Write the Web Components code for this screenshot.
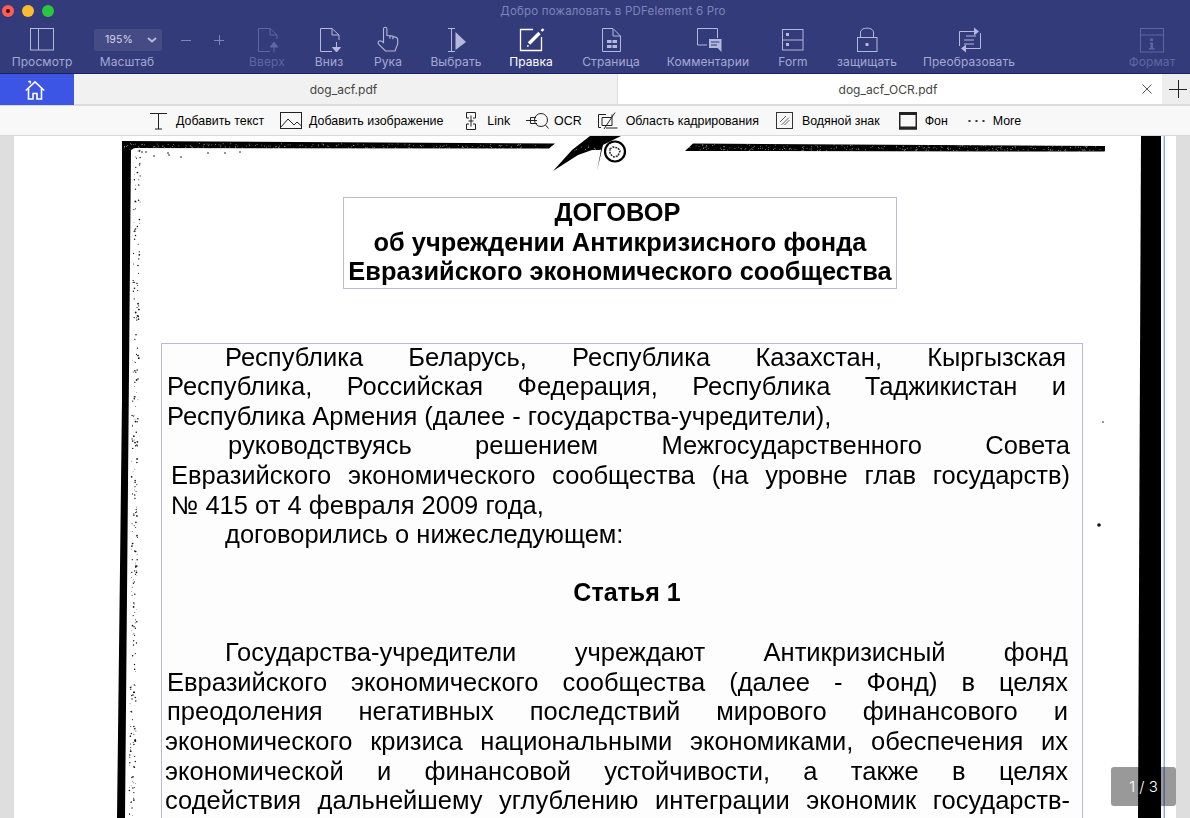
<!DOCTYPE html>
<html lang="ru"><head><meta charset="utf-8"><title>PDFelement</title>
<style>
html,body{margin:0;padding:0;width:1190px;height:818px;overflow:hidden;background:#fff;font-family:"Liberation Sans",Arial,sans-serif}
pdf-app svg{display:block}
</style></head><body>
<pdf-app>
  <pdf-header>
    <span slot="title">Добро пожаловать в PDFelement 6 Pro</span>
    <tool-button w="84"><svg slot="icon" viewBox="20 24 44 32" width="44" height="32" fill="none" stroke="#b4b8da"><rect x="30.5" y="28.5" width="23" height="21.5"/><path d="M38.5 28v22"/></svg>Просмотр</tool-button>
    <zoom-control value="195%">Масштаб</zoom-control>
    <tool-button w="62" state="off"><svg slot="icon" viewBox="245 24 44 32" width="44" height="32" fill="none" stroke="#5f66a3"><path d="M270 51.5H258.5V28.5H270L277 35V39M270 29V35H277"/><path d="M274 47V52.5" /><path d="M274 42L278 47H270Z" fill="#5f66a3"/></svg>Вверх</tool-button>
    <tool-button w="62"><svg slot="icon" viewBox="307 24 44 32" width="44" height="32" fill="none" stroke="#b4b8da"><path d="M332 51.5H320.5V28.5H332L339 35V40M332 29V35H339"/><path d="M336.5 42V48"/><path d="M332.5 47.5H340.5L336.5 52Z" fill="#b4b8da"/></svg>Вниз</tool-button>
    <tool-button w="56"><svg slot="icon" viewBox="366 24 44 32" width="44" height="32" fill="none" stroke="#b4b8da" stroke-width="1.1"><path d="M383.5 42.5V29a1.7 1.7 0 0 1 3.4 0V35.5l3 .2v3-3l3 .5v3-2.6l2.6.5c1.4.3 2.2 1.2 2.2 2.5V44L395 51H385.5L378.8 44.5C377.6 43 378 41 380 40.8 381.3 40.8 382.5 41.6 383.5 42.5Z"/></svg>Рука</tool-button>
    <tool-button w="80"><svg slot="icon" viewBox="434 24 44 32" width="44" height="32" fill="none" stroke="#b4b8da"><path d="M448 28.5H455M451.5 28.5V51.5M448 51.5H455"/><path d="M455.5 32L466 42 455.5 50Z" fill="#b4b8da" stroke="none"/></svg>Выбрать</tool-button>
    <tool-button w="70" state="on"><svg slot="icon" viewBox="509 24 44 32" width="44" height="32" fill="none" stroke="#fff"><path d="M533 29.5H520.5V50.5H541.5V37" stroke-width="1.3"/><path d="M529 43.5L539.5 33" stroke-width="3.4"/><path d="M528 45l-.6 1.4 1.6-.6" stroke-width="1"/><path d="M541.5 31L543.5 29" stroke-width="2.4"/></svg>Правка</tool-button>
    <tool-button w="90"><svg slot="icon" viewBox="589 24 44 32" width="44" height="32" fill="none" stroke="#b4b8da"><path d="M602.5 28.5H613L620.5 36V51.5H602.5ZM613 29V36H620"/><g fill="#b4b8da" stroke="none"><rect x="607" y="40" width="4.5" height="3"/><rect x="612.5" y="40" width="4.5" height="3"/><rect x="607" y="45" width="4.5" height="3"/><rect x="612.5" y="45" width="4.5" height="3"/></g></svg>Страница</tool-button>
    <tool-button w="104"><svg slot="icon" viewBox="686 24 44 32" width="44" height="32" fill="none" stroke="#b4b8da"><path d="M707 45H697.5V28.5H717.5V38"/><path d="M709 39H721.5V52L717.5 48H709Z" fill="#b4b8da" stroke="none"/><path d="M711 42H719.5M711 45H717" stroke="#343b7a"/></svg>Комментарии</tool-button>
    <tool-button w="66"><svg slot="icon" viewBox="771 24 44 32" width="44" height="32" fill="none" stroke="#b4b8da"><rect x="782.5" y="29.5" width="20.5" height="20.5"/><path d="M782 40H803"/><rect x="786" y="33" width="3" height="3" fill="#b4b8da" stroke="none"/><rect x="786" y="43" width="3" height="3" fill="#b4b8da" stroke="none"/></svg>Form</tool-button>
    <tool-button w="82"><svg slot="icon" viewBox="845 24 44 32" width="44" height="32" fill="none" stroke="#b4b8da"><rect x="857.5" y="37.5" width="19.5" height="14"/><path d="M860.5 37.5V33c0-3 2-4.8 6.500-4.800s6.500 1.800 6.500 4.800V37.500"/><rect x="865.500" y="43" width="3" height="3" fill="#b4b8da" stroke="none"/></svg>защищать</tool-button>
    <tool-button w="122"><svg slot="icon" viewBox="947 24 44 32" width="44" height="32" fill="none" stroke="#b4b8da"><path d="M959.500 46V31.500H975M980.500 33V48.500H965M966 36H976M964 40H974M964 44H974"/><path d="M974 27.500L979 31.500 974 35.500ZM966 44.500L961 48.500 966 52.500Z" fill="#b4b8da" stroke="none"/></svg>Преобразовать</tool-button>
    <tool-button w="76" state="off" slot="end"><svg slot="icon" viewBox="1130 24 44 32" width="44" height="32" fill="none" stroke="#5f66a3"><rect x="1140.500" y="28.500" width="23" height="23.500"/><path d="M1140 35H1164"/><path d="M1150 38.500H1153V41H1150ZM1150 42.500H1153V48H1154.500V49.500H1149V48H1150.500V44H1150Z" fill="#5f66a3" stroke="none"/></svg>Формат</tool-button>
  </pdf-header>
  <tab-strip>
    <doc-tab style="--w:543px">dog_acf.pdf</doc-tab>
    <doc-tab style="--w:545px" active>dog_acf_OCR.pdf</doc-tab>
  </tab-strip>
  <edit-toolbar>
    <edit-item gap="8" style="margin-left:150px"><svg slot="icon" viewBox="150 113 18 18" width="18" height="18" fill="none" stroke="#222"><path d="M150 114.500H167M158.500 114.500V130M155 130H162"/></svg>Добавить текст</edit-item>
    <edit-item gap="7" style="margin-left:16px"><svg slot="icon" viewBox="281 113 22 18" width="22" height="18" fill="none" stroke="#222"><rect x="281.500" y="113.500" width="21" height="16"/><path d="M282 128L289 120 295 126 298 123 302.500 127"/></svg>Добавить изображение</edit-item>
    <edit-item gap="11" style="margin-left:23px"><svg slot="icon" viewBox="466 113 10 18" width="10" height="18" fill="none" stroke="#222"><path d="M469 119H466.500V113.500H475.500V119H473M469 125H466.500V130.500H475.500V125H473M471 116.500V127.500M468.500 122H473.500"/></svg>Link</edit-item>
    <edit-item gap="5" style="margin-left:16px"><svg slot="icon" viewBox="526 112 23 18" width="23" height="18" fill="none" stroke="#222"><path d="M536 117.500H530.500V123.500H537M526 120.500H537"/><circle cx="541" cy="120" r="6.500"/><path d="M545.500 125L548.500 128.500"/></svg>OCR</edit-item>
    <edit-item gap="8" style="margin-left:16px"><svg slot="icon" viewBox="598 113 20 18" width="20" height="18" fill="none" stroke="#222"><path d="M606 115.500H598.500V128.500H601M612 115.500V126.500H602V118.500H611M615 113.500L604 130M606 129H617.500"/></svg>Область кадрирования</edit-item>
    <edit-item gap="9" style="margin-left:17px"><svg slot="icon" viewBox="776 112 17 18" width="17" height="18" fill="none" stroke="#333"><rect x="776.500" y="112.500" width="16" height="16"/><path d="M780 122L786 116M781.500 125L789 117.500M784.500 125L789.500 120" stroke="#666"/></svg>Водяной знак</edit-item>
    <edit-item gap="8" style="margin-left:19px"><svg slot="icon" viewBox="899 112 18 18" width="18" height="18" fill="none" stroke="#222"><rect x="899.750" y="112.750" width="16.500" height="16" stroke-width="1.500"/><rect x="899" y="112" width="18" height="3" fill="#222" stroke="none"/><rect x="899" y="126.500" width="18" height="3" fill="#222" stroke="none"/></svg>Фон</edit-item>
    <edit-item gap="8" style="margin-left:20px"><svg slot="icon" viewBox="968 112 17 18" width="17" height="18" fill="#333"><rect x="968.500" y="120" width="2" height="2"/><rect x="975.500" y="120" width="2" height="2"/><rect x="982.500" y="120" width="2" height="2"/></svg>More</edit-item>
  </edit-toolbar>
  <doc-view>
    <title-box>
      <div style="margin-right:5px">ДОГОВОР</div>
      <div>об учреждении Антикризисного фонда</div>
      <div>Евразийского экономического сообщества</div>
    </title-box>
    <body-box>
      <doc-line l="63" r="16" j>Республика Беларусь, Республика Казахстан, Кыргызская</doc-line>
      <doc-line l="5" r="16" j>Республика, Российская Федерация, Республика Таджикистан и</doc-line>
      <doc-line l="5">Республика Армения (далее - государства-учредители),</doc-line>
      <doc-line l="66" r="12" j>руководствуясь решением Межгосударственного Совета</doc-line>
      <doc-line l="9" r="12" j>Евразийского экономического сообщества (на уровне глав государств)</doc-line>
      <doc-line l="9">№ 415 от 4 февраля 2009 года,</doc-line>
      <doc-line l="63">договорились о нижеследующем:</doc-line>
      <doc-line style="height:28.400px"></doc-line>
      <doc-line c>Статья 1</doc-line>
      <doc-line style="height:30.400px"></doc-line>
      <doc-line l="63" r="14" j>Государства-учредители учреждают Антикризисный фонд</doc-line>
      <doc-line l="5" r="14" j>Евразийского экономического сообщества (далее - Фонд) в целях</doc-line>
      <doc-line l="5" r="14" j>преодоления негативных последствий мирового финансового и</doc-line>
      <doc-line l="3" r="14" j>экономического кризиса национальными экономиками, обеспечения их</doc-line>
      <doc-line l="3" r="14" j>экономической и финансовой устойчивости, а также в целях</doc-line>
      <doc-line l="3" r="12" j>содействия дальнейшему углублению интеграции экономик государств-</doc-line>
    </body-box>
    <page-badge slot="over">1 / 3</page-badge>
  </doc-view>
</pdf-app>
<script>
function def(name, css, html, init){
  customElements.define(name, class extends HTMLElement{
    constructor(){super();this.attachShadow({mode:'open'}).innerHTML='<style>'+css+'</style>'+html;}
    connectedCallback(){ if(init) init(this,this.shadowRoot); }
  });
}
const UI='Inter,Roboto,"Liberation Sans",sans-serif';
def('pdf-app',':host{display:flex;flex-direction:column;width:1190px;height:818px;overflow:hidden}','<slot></slot>');
def('pdf-header',`:host{display:block;height:73px;background:#343b7a;border-bottom:1px solid #1c2160;font-family:${UI}}
.t{height:22px;display:flex;align-items:center;position:relative;justify-content:center;padding-left:36px;font-size:11.500px;color:#7e84ba;letter-spacing:.2px}
.l{position:absolute;left:2px;top:5px;display:flex;gap:8px}
.l i{width:12px;height:12px;border-radius:50%;display:block;box-sizing:border-box}
.r{background:#fc5f57;display:flex!important;align-items:center;justify-content:center}.r b{width:4px;height:4px;border-radius:50%;background:#500}
.y{background:#fdbc2e}.g{background:#28c83f}
.b{display:flex;height:51px;padding-top:2px;box-sizing:border-box}.s{flex:1}`,
`<div class="t"><div class="l"><i class="r"><b></b></i><i class="y"></i><i class="g"></i></div><slot name="title"></slot></div>
<div class="b"><slot></slot><span class="s"></span><slot name="end"></slot></div>`);
def('tool-button',`:host{display:flex;flex-direction:column;align-items:center;flex:none;color:#a4a9d2;font-size:12px;line-height:14px;letter-spacing:.1px;white-space:nowrap}
:host([state=off]){color:#5f66a3}:host([state=on]){color:#fff}
.i{height:31px}`,'<div class="i"><slot name="icon"></slot></div><slot></slot>',
(el)=>{el.style.width=el.getAttribute('w')+'px'});
def('zoom-control',`:host{display:block;flex:none;width:152px;color:#a4a9d2;font-size:12px;line-height:14px;letter-spacing:.1px}
.top{display:flex;align-items:center;height:31px;box-sizing:border-box;padding:1px 0 0 10px}
.sel{width:68px;height:22px;background:#454c85;border-radius:2px;display:flex;align-items:center;justify-content:space-between;padding:0 5px 0 11px;box-sizing:border-box;font-size:10.500px;color:#d4d6ea}
.op{display:flex;gap:21px;margin-left:18px}
.lab{width:86px;text-align:center}`,
`<div class="top"><div class="sel"><span id="v"></span><svg width="10" height="6" viewBox="0 0 10 6" fill="none" stroke="#b4b8da" stroke-width="2"><path d="M1 1l4 3.500 4-3.500"/></svg></div>
<div class="op"><svg width="12" height="12" viewBox="0 0 12 12" stroke="#7f85b8"><path d="M1 6.500H11"/></svg><svg width="12" height="12" viewBox="0 0 12 12" stroke="#7f85b8"><path d="M1 6.500H11M6.500 1V11"/></svg></div></div>
<div class="lab"><slot></slot></div>`,(el,s)=>{s.getElementById('v').textContent=el.getAttribute('value')});
def('tab-strip',`:host{display:flex;height:32px;box-sizing:border-box;border-bottom:2px solid #dcdcdc;font-family:${UI};background:#f1f1f1}
.h{width:74px;background:#3d55e5;display:flex;align-items:center;justify-content:center;margin-bottom:-1px;padding-right:5px;box-sizing:border-box}
.p{width:28px;background:#eee;display:flex;align-items:center;justify-content:center;padding-left:3px;box-sizing:border-box}`,
`<div class="h"><svg width="20" height="20" viewBox="0 0 20 20" fill="none" stroke="#fff" stroke-width="1.600"><path d="M.8 10.500L10 1.800l9.200 8.700M3.500 8.500V19H8V13.500H12V19H16.500V8.500"/><path d="M3.300 1.500h2v2" stroke-width="1.400"/></svg></div>
<slot></slot><div class="p"><svg width="18" height="18" viewBox="0 0 18 18" stroke="#222"><path d="M0 9.500H18M9.500 0V18"/></svg></div>`);
def('doc-tab',`:host{display:flex;align-items:center;justify-content:center;width:var(--w);flex:none;font-size:12px;color:#444;letter-spacing:.03px;position:relative;background:#f1f1f1;box-sizing:border-box;padding:1px 4px 0 0}
:host([active]){background:#fff;border-left:1px solid #ddd}
svg{display:none;position:absolute;right:10px;top:10px}:host([active]) svg{display:block}`,
`<slot></slot><svg width="10" height="10" viewBox="0 0 10 10" stroke="#555" fill="none"><path d="M.5.500l9 9M9.500.500l-9 9"/></svg>`);
def('edit-toolbar',`:host{display:flex;align-items:center;height:30px;box-sizing:border-box;background:#f8f8f8;border-bottom:1px solid #d8d8d8}`,'<slot></slot>');
def('edit-item',`:host{display:flex;align-items:center;flex:none;font-size:12.400px;color:#000;white-space:nowrap}
#g{display:block;height:18px}`,'<div id="g"><slot name="icon"></slot></div><slot></slot>',(el,s)=>{s.getElementById('g').style.marginRight=el.getAttribute('gap')+'px'});
def('doc-view',`:host{display:block;position:relative;flex:1;overflow:hidden;background:#fff;font-family:"Liberation Sans",Arial,sans-serif;color:#000}
.sl,.sr{position:absolute;top:0;bottom:0;background:#dedede}.sl{left:0;width:14px}.sr{right:0;width:14px}
svg{position:absolute;left:0;top:0}
.c{position:relative;filter:blur(.25px)}
`,`<div class="sl"></div><div class="sr"></div><svg id="f" width="1190" height="682" viewBox="0 136 1190 682"></svg><div class="c"><slot></slot></div><slot name="over"></slot>`,
(el,s)=>{
  let seed=7; const R=()=>(seed=(seed*16807)%2147483647)/2147483647;
  let d='';
  d+='<path fill="#000" d="M122 141L555 143.500 549 148.500 135 148 131 150 125 818H117L122 400Z"/>';
  d+='<path fill="#000" d="M685 151L693 143.500 1105 146 1105 151.500Z"/>';
  d+='<path fill="#000" d="M1141 136H1161V818H1138Z"/><rect x="1163.500" y="136" width="1.500" height="682" fill="#8fabee"/>';
  d+='<path fill="#000" d="M553 171L572 150 590 136H621L603 145 597 171 601 150 592 150 578 155Z"/><circle cx="615" cy="151.500" r="10" fill="#fff" stroke="#000" stroke-width="2.200"/><path d="M610 149l3-2 5 1 2 3-2 5-4 1-4-3z" fill="none" stroke="#222" stroke-width="1.500" stroke-dasharray="2 1"/>';
  let sp='';
  for(let i=0;i<260;i++){const y=150+R()*668, x=134-(y-150)*.0075+R()*6.5, r=.35+R()*.55;sp+=`<circle cx="${x.toFixed(1)}" cy="${y.toFixed(1)}" r="${r.toFixed(2)}"/>`}
  [[142,152],[146,152],[154,156],[168,153],[169,155],[181,157],[208,153],[225,153],[240,152]].forEach(p=>sp+=`<circle cx="${p[0]}" cy="${p[1]}" r=".8"/>`);
  [[1103,422,.8],[1099,525,1.8],[995,724,.8]].forEach(p=>sp+=`<circle cx="${p[0]}" cy="${p[1]}" r="${p[2]}"/>`);
  d+='<g fill="#111">'+sp+'</g>';
  let w='';
  for(let i=0;i<500;i++){const x=124+R()*980,y=143+R()*6+(x-124)*.002;w+=`<rect x="${x.toFixed(1)}" y="${y.toFixed(1)}" width=".8" height=".8"/>`}
  d+='<g fill="#fff" opacity=".7">'+w+'</g>';
  s.getElementById('f').innerHTML=d;
});
def('title-box',`:host{display:block;box-sizing:border-box;margin:61px 0 0 343px;width:554px;height:92px;border:1px solid #b7bbd8;background:#fff;text-align:center;font-weight:700;font-size:25.400px;line-height:29.500px;white-space:nowrap}`,'<slot></slot>');
def('body-box',`:host{display:block;box-sizing:border-box;margin:54px 0 0 161px;width:922px;height:500px;border:1px solid #b7bbd8;border-bottom:0;background:#fdfdfe;font-size:25.500px}
.in{margin-top:-1.300px}`,'<div class="in"><slot></slot></div>');
def('doc-line',`:host{display:block;height:29.600px;line-height:29.600px;white-space:normal}
:host([j]){text-align:justify;text-align-last:justify}
:host([c]){text-align:center;font-weight:700;font-size:25px;padding-left:10px}`,'<slot></slot>',(el)=>{
  if(el.hasAttribute('l'))el.style.marginLeft=el.getAttribute('l')+'px';
  if(el.hasAttribute('r'))el.style.marginRight=el.getAttribute('r')+'px';
});
def('page-badge',`:host{position:absolute;left:1111px;top:631px;width:65px;height:39px;border-radius:3px;background:rgba(0,0,0,.4);color:#fff;font-family:${UI};font-size:15px;font-weight:300;display:flex;align-items:center;justify-content:center}`,'<slot></slot>');
</script>
</body></html>
